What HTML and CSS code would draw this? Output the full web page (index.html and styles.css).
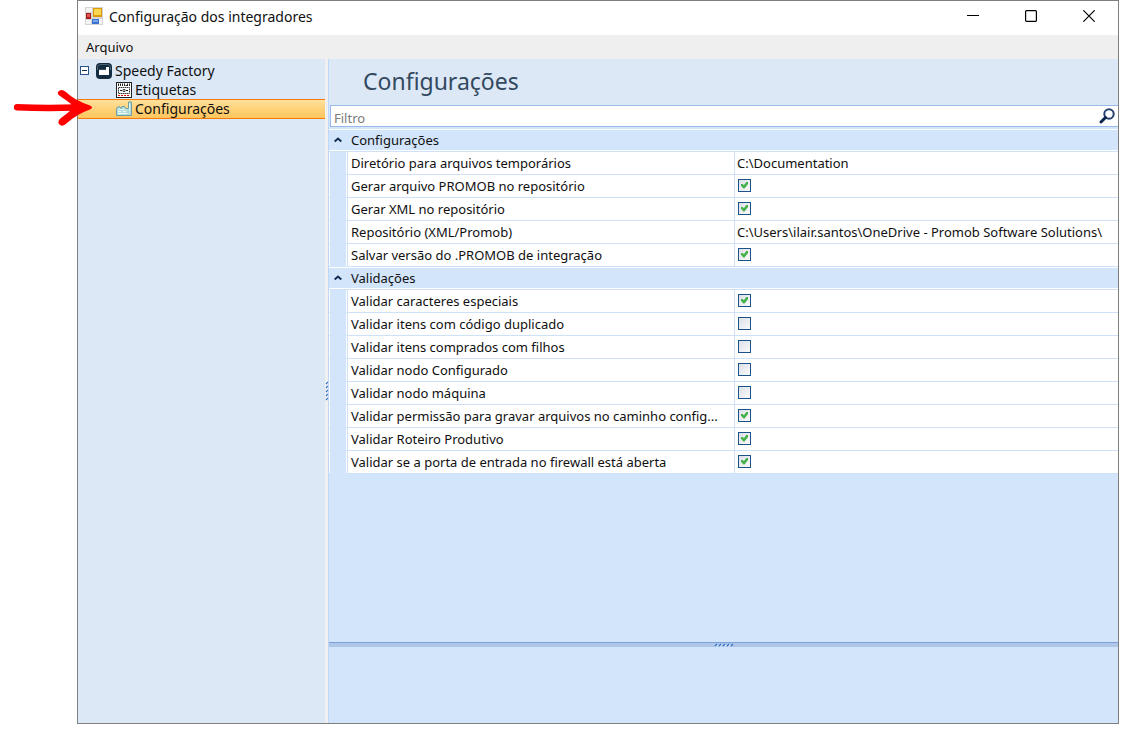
FILE: index.html
```
<!DOCTYPE html>
<html lang="pt-BR">
<head>
<meta charset="utf-8">
<title>Configuração dos integradores</title>
<link rel="stylesheet" href="styles.css">
</head>
<body>
<main class="window">
  <header class="titlebar">
    <svg class="app-icon" width="18" height="18" viewBox="0 0 18 18" aria-hidden="true">
      <rect width="18" height="18" fill="#d4d4d4"/>
      <path d="M1 1h6v4H1zM1 13h5v4H1zM14 12h3v5h-3z" fill="#f4f4f4"/>
      <rect x="1" y="6" width="5" height="6" fill="#a81c1c"/><rect x="2" y="7" width="3" height="3" fill="#d85a50"/>
      <rect x="8" y="1" width="9" height="9" fill="#dc9a08"/><rect x="9" y="2" width="7" height="6" fill="#fad652"/>
      <rect x="7" y="12" width="7" height="5" fill="#3b72cc"/><rect x="8" y="13" width="5" height="2" fill="#79a7ee"/>
    </svg>
    <h1 class="window-title">Configuração dos integradores</h1>
    <div class="window-buttons">
      <button class="window-button" aria-label="Minimizar"><svg width="12" height="12" viewBox="0 0 12 12"><path d="M0 5.5h12" stroke="#000"/></svg></button>
      <button class="window-button" aria-label="Maximizar"><svg width="12" height="12" viewBox="0 0 12 12"><rect x=".6" y=".6" width="10.8" height="10.8" rx="1" fill="none" stroke="#000" stroke-width="1.2"/></svg></button>
      <button class="window-button" aria-label="Fechar"><svg width="12" height="12" viewBox="0 0 12 12"><path d="M.3.3l11.4 11.4M11.7.3.3 11.7" stroke="#000" stroke-width="1.2"/></svg></button>
    </div>
  </header>
  <nav class="menubar"><button class="menu-item">Arquivo</button></nav>
  <div class="body">
    <aside class="tree">
      <button class="node node-root">
        <svg class="toggle" width="9" height="9" viewBox="0 0 9 9"><rect x=".5" y=".5" width="8" height="8" fill="#fff" stroke="#2c5288"/><path d="M2 4.5h5" stroke="#10284c"/></svg>
        <svg width="16" height="16" viewBox="0 0 16 16"><rect width="16" height="16" rx="4" fill="#142c40"/><path d="M1.500 7V4.500q0-3 3-3h7q3 0 3 3V7" fill="none" stroke="#4c6677"/><path d="M3 12V6.500l1 .8 1-.8 1 .8 1-.8 1 .8 1-.8 1 .8V4h3v8z" fill="#fff"/></svg>
        Speedy Factory
      </button>
      <button class="node">
        <svg width="16" height="16" viewBox="0 0 16 16"><rect x=".5" y=".5" width="15" height="15" fill="#fff" stroke="#222"/><path d="M2.500 1.500v2.500M4.500 1.500v2.500M6.500 1.500v2.500M8.500 1.500v2.500M9.500 3.500h2M11.500 1.500v2.500M13.500 1.500v2.500" stroke="#222"/><rect x="2.500" y="5.500" width="11" height="6" fill="none" stroke="#333" stroke-dasharray="1.500 .5"/><path d="M4 8.500h2M10 8.500h2" stroke="#222"/><path d="M7 7.500h2v2H7z" fill="none" stroke="#222" stroke-width=".8"/><path d="M2 13.500h12" stroke="#e00000" stroke-dasharray="2 1"/></svg>
        Etiquetas
      </button>
      <button class="node node-selected" aria-current="page">
        <svg width="16" height="16" viewBox="0 0 16 16"><path d="M.5 14.500V8.500L1 6.500l2.500-1 1.500 2 1-2 2.500 0 1 2 3 0V1h3v13.500z" fill="#b4dedb" stroke="#6f9da2"/><path d="M2 8.500h8M13.500 2.500v7" stroke="#def4ee"/><path d="M2 10.500h3M7 10.500h3M2 12.500h9" stroke="#edfaf5"/></svg>
        Configurações
      </button>
    </aside>
    <div class="splitter"><svg class="grip" width="3" height="20" viewBox="0 0 3 20"><path d="M1 3l2-2M1 7l2-2M1 11l2-2M1 15l2-2M1 19l2-2" stroke="#2f74c8" stroke-width="1.200"/></svg></div>
    <section class="content">
      <h2 class="page-title">Configurações</h2>
      <div class="filter">
        <input class="filter-input" type="text" placeholder="Filtro" aria-label="Filtro">
        <button class="search" aria-label="Pesquisar"><svg width="16" height="16" viewBox="0 0 16 16"><circle cx="10" cy="6" r="4.700" fill="#fff" stroke="#24406e" stroke-width="2"/><path d="M6.500 9.500 2 14" stroke="#0e2550" stroke-width="3" stroke-linecap="round"/></svg></button>
      </div>
      <div class="grid-area">
        <table class="grid">
          <colgroup><col class="col-gutter"><col class="col-name"><col></colgroup>
          <tbody>
            <tr class="group"><th><svg width="8" height="6" viewBox="0 0 8 6"><path d="M.7 4.500 4 1.500l3.300 3" fill="none" stroke="#152c55" stroke-width="2"/></svg></th><th colspan="2">Configurações</th></tr>
            <tr><td class="gutter"></td><td>Diretório para arquivos temporários</td><td>C:\Documentation</td></tr>
            <tr><td class="gutter"></td><td><label for="o1">Gerar arquivo PROMOB no repositório</label></td><td><input class="check" type="checkbox" id="o1" checked></td></tr>
            <tr><td class="gutter"></td><td><label for="o2">Gerar XML no repositório</label></td><td><input class="check" type="checkbox" id="o2" checked></td></tr>
            <tr><td class="gutter"></td><td>Repositório (XML/Promob)</td><td>C:\Users\ilair.santos\OneDrive - Promob Software Solutions\</td></tr>
            <tr><td class="gutter"></td><td><label for="o3">Salvar versão do .PROMOB de integração</label></td><td><input class="check" type="checkbox" id="o3" checked></td></tr>
            <tr class="group"><th><svg width="8" height="6" viewBox="0 0 8 6"><path d="M.7 4.500 4 1.500l3.300 3" fill="none" stroke="#152c55" stroke-width="2"/></svg></th><th colspan="2">Validações</th></tr>
            <tr><td class="gutter"></td><td><label for="v1">Validar caracteres especiais</label></td><td><input class="check" type="checkbox" id="v1" checked></td></tr>
            <tr><td class="gutter"></td><td><label for="v2">Validar itens com código duplicado</label></td><td><input class="check" type="checkbox" id="v2"></td></tr>
            <tr><td class="gutter"></td><td><label for="v3">Validar itens comprados com filhos</label></td><td><input class="check" type="checkbox" id="v3"></td></tr>
            <tr><td class="gutter"></td><td><label for="v4">Validar nodo Configurado</label></td><td><input class="check" type="checkbox" id="v4"></td></tr>
            <tr><td class="gutter"></td><td><label for="v5">Validar nodo máquina</label></td><td><input class="check" type="checkbox" id="v5"></td></tr>
            <tr><td class="gutter"></td><td><label for="v6">Validar permissão para gravar arquivos no caminho config...</label></td><td><input class="check" type="checkbox" id="v6" checked></td></tr>
            <tr><td class="gutter"></td><td><label for="v7">Validar Roteiro Produtivo</label></td><td><input class="check" type="checkbox" id="v7" checked></td></tr>
            <tr><td class="gutter"></td><td><label for="v8">Validar se a porta de entrada no firewall está aberta</label></td><td><input class="check" type="checkbox" id="v8" checked></td></tr>
          </tbody>
        </table>
      </div>
      <div class="h-splitter"><svg width="20" height="4" viewBox="0 0 20 4"><path d="M1 3l2-2M5 3l2-2M9 3l2-2M13 3l2-2M17 3l2-2" stroke="#2f74c8" stroke-width="1.200"/><path d="M2.500 3.500l1.500-1.500M6.500 3.500l1.500-1.500M10.500 3.500l1.500-1.500M14.500 3.500l1.500-1.500" stroke="#e8f2ff"/></svg></div>
      <div class="details"></div>
    </section>
  </div>
</main>
<svg class="pointer" width="82" height="40" viewBox="0 0 82 40" aria-hidden="true"><path d="M3 18.200Q30 19.500 62 18.500" fill="none" stroke="#fe0000" stroke-width="6.500" stroke-linecap="round"/><path d="M44 3Q47-1 52 3Q60 11 76 16.500Q80 18.500 76 20.500Q63 25 53 34Q48 39 45 35Q43 32 47 29Q54 24 58 20L57 15Q52 11 46 7Q43 5 44 3Z" fill="#fe0000"/></svg>
</body>
</html>
```
FILE: styles.css
```
* { box-sizing: border-box; }

body {
  margin: 0;
  padding: 0 9px 9px 77px;
  min-height: 100vh;
  display: flex;
  background: #fff;
  color: #101010;
  font: 13px/22px "Noto Sans", "Open Sans", sans-serif;
}

button {
  border: 0;
  margin: 0;
  padding: 0;
  background: none;
  color: inherit;
  font: inherit;
}

svg { display: block; flex: none; }

.window {
  flex: 1;
  min-width: 0;
  display: flex;
  flex-direction: column;
  border: 1px solid #7f7f7f;
}

.titlebar {
  height: 34px;
  display: flex;
  align-items: center;
  padding-left: 7px;
  gap: 6px;
}

.app-icon { margin-bottom: 4px; }

.window-title {
  margin: 0 0 3px;
  flex: 1;
  font-size: 14px;
  font-weight: 400;
}

.window-buttons {
  display: flex;
  align-self: stretch;
}

.window-button {
  width: 58px;
  padding-bottom: 4px;
  display: flex;
  align-items: center;
  justify-content: center;
}

.menubar {
  height: 24px;
  display: flex;
  align-items: center;
  padding-left: 8px;
  background: #efefef;
}

.body {
  flex: 1;
  display: flex;
}

.tree {
  width: 247px;
  padding-top: 2px;
  background: #dce8f6;
}

.node {
  width: 100%;
  height: 19px;
  padding-left: 38px;
  display: flex;
  align-items: center;
  gap: 3px;
  font-size: 14px;
  line-height: 18px;
}

.node-root { padding-left: 2px; }

.toggle { margin-right: 4px; }

.node-selected {
  height: 20px;
  border: 1px solid #f57a0c;
  border-width: 1px 0;
  background: linear-gradient(#ffe09a, #ffc55c);
}

.splitter {
  width: 4px;
  display: flex;
  align-items: center;
  border-right: 1px solid #bcd8fb;
  background: #f0f0f0;
}

.content {
  flex: 1;
  min-width: 0;
  display: flex;
  flex-direction: column;
  background: #d3e5fb;
}

.page-title {
  margin: 0;
  height: 46px;
  padding-left: 34px;
  background: #dce8f6;
  color: #33495f;
  font-size: 23px;
  font-weight: 400;
  line-height: 45px;
}

.filter {
  height: 22px;
  margin-left: 1px;
  display: flex;
  align-items: center;
  border: 1px solid #98bbea;
  border-right: 0;
  background: #fff;
}

.filter-input {
  flex: 1;
  min-width: 0;
  height: 20px;
  padding: 4px 0 0 3px;
  border: 0;
  outline: 0;
  background: none;
  font: inherit;
}

.filter-input::placeholder { color: #7b7b7b; }

.search { padding-right: 3px; }

.grid-area {
  flex: 1;
  padding-top: 2px;
}

.grid {
  width: 100%;
  table-layout: fixed;
  border-spacing: 0;
}

.col-gutter { width: 19px; }
.col-name { width: 387px; }

.grid td, .grid th {
  height: 23px;
  padding: 0 2px;
  border-bottom: 1px solid #cfe1f6;
  background: #fff;
  font-weight: 400;
  line-height: 22px;
  text-align: left;
  white-space: nowrap;
}

.grid td:nth-child(2) {
  padding-left: 3px;
  border-right: 1px solid #cfe1f6;
}

.grid .group th {
  padding-left: 3px;
  background: #d3e5fb;
  box-shadow: inset 0 1px #fff, inset 0 -1px #fff;
}

.grid .group th:first-child { padding-left: 5px; }

.grid .gutter {
  border-right: 1px solid #cfe1f6;
  border-bottom-color: #d3e5fb;
  background: #d3e5fb;
  box-shadow: inset 1px 0 #fff, inset -1px 0 #fff;
}

.check {
  appearance: none;
  display: block;
  width: 13px;
  height: 13px;
  margin: 0 1px 2px;
  border: 1px solid #1c528c;
  background: linear-gradient(135deg, #dbe0e8, #fafafa);
}

.check:checked::after {
  content: "";
  display: block;
  width: 7px;
  height: 7px;
  margin: 2px;
  background: #43b04a;
  clip-path: polygon(0 35%, 25% 35%, 40% 55%, 80% 5%, 100% 5%, 100% 35%, 50% 100%, 35% 100%, 0 60%);
}

.h-splitter {
  height: 5px;
  display: flex;
  justify-content: center;
  border-top: 1px solid #7ba3da;
  background: #b0c6e8;
}

.details { height: 76px; }

.pointer {
  position: absolute;
  left: 14px;
  top: 89px;
}
```
